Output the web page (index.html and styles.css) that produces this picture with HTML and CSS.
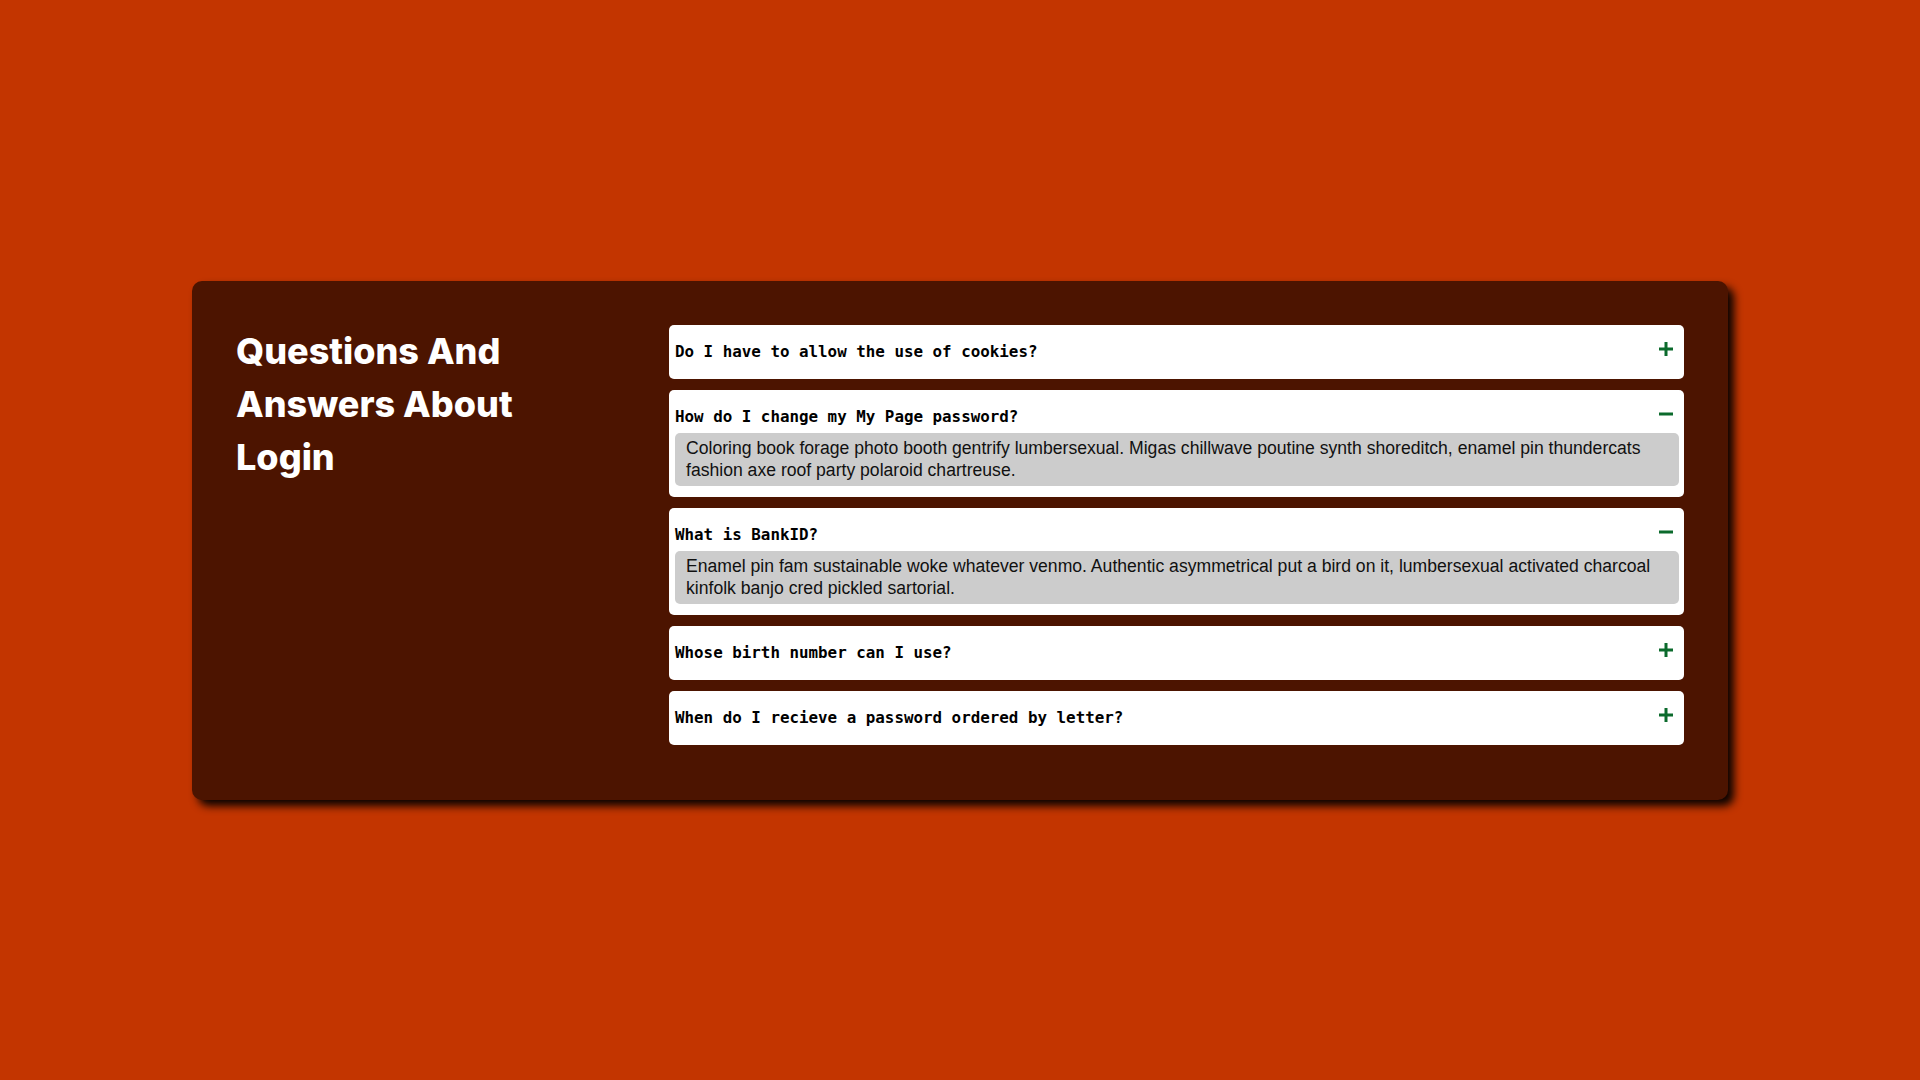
FILE: index.html
```html
<!DOCTYPE html>
<html lang="en">
<head>
<meta charset="utf-8">
<title>FAQ</title>
<link rel="stylesheet" href="styles.css">
</head>
<body>
<main class="card">
  <section class="intro">
    <h1 class="title">Questions And Answers About Login</h1>
  </section>
  <section class="faq">
    <div class="item">
      <div class="question"><span>Do I have to allow the use of cookies?</span>
        <svg class="icon" viewBox="0 0 14 14" width="14" height="14"><rect x="0" y="5.5" width="14" height="3"/><rect x="5.5" y="0" width="3" height="14"/></svg>
      </div>
    </div>
    <div class="item">
      <div class="question"><span>How do I change my My Page password?</span>
        <svg class="icon" viewBox="0 0 14 14" width="14" height="14"><rect x="0" y="5.5" width="14" height="3"/></svg>
      </div>
      <p class="answer">Coloring book forage photo booth gentrify lumbersexual. Migas chillwave poutine synth shoreditch, enamel pin thundercats fashion axe roof party polaroid chartreuse.</p>
    </div>
    <div class="item">
      <div class="question"><span>What is BankID?</span>
        <svg class="icon" viewBox="0 0 14 14" width="14" height="14"><rect x="0" y="5.5" width="14" height="3"/></svg>
      </div>
      <p class="answer">Enamel pin fam sustainable woke whatever venmo. Authentic asymmetrical put a bird on it, lumbersexual activated charcoal kinfolk banjo cred pickled sartorial.</p>
    </div>
    <div class="item">
      <div class="question"><span>Whose birth number can I use?</span>
        <svg class="icon" viewBox="0 0 14 14" width="14" height="14"><rect x="0" y="5.5" width="14" height="3"/><rect x="5.5" y="0" width="3" height="14"/></svg>
      </div>
    </div>
    <div class="item">
      <div class="question"><span>When do I recieve a password ordered by letter?</span>
        <svg class="icon" viewBox="0 0 14 14" width="14" height="14"><rect x="0" y="5.5" width="14" height="3"/><rect x="5.5" y="0" width="3" height="14"/></svg>
      </div>
    </div>
  </section>
</main>
</body>
</html>
```
FILE: styles.css
```css
* { box-sizing: border-box; }
html, body { height: 100%; }
body {
  margin: 0;
  background: #c33500;
  display: flex;
  align-items: center;
  justify-content: center;
  font-family: "Liberation Sans", Arial, sans-serif;
}
.card {
  width: 1536px;
  background: #4c1400;
  border-radius: 10px;
  padding: 44px;
  display: flex;
  box-shadow: 6px 6px 8px rgba(0, 0, 0, 0.95);
}
.intro {
  flex: 0 0 433px;
}
.title {
  margin: 0;
  max-width: 320px;
  color: #ffffff;
  font-family: Inter, "Open Sans", sans-serif;
  font-weight: 800;
  font-size: 36px;
  line-height: 53px;
  letter-spacing: 0;
}
.faq {
  flex: 1;
}
.item {
  background: #ffffff;
  border-radius: 5px;
  padding: 5px 5px 11px 6px;
  margin-bottom: 11px;
}
.question {
  display: flex;
  justify-content: space-between;
  align-items: flex-start;
  padding: 13px 0 7px 0;
  font-family: "DejaVu Sans Mono", monospace;
  font-weight: bold;
  font-size: 15.85px;
  line-height: 18px;
  color: #000000;
}
.icon {
  fill: #0b6a2c;
  margin-top: -1px;
  margin-right: 6.5px;
  flex: 0 0 auto;
}
.answer {
  margin: 0;
  background: #cccccc;
  border-radius: 5px;
  padding: 4.5px 11px;
  font-size: 17.6px;
  line-height: 22px;
  color: #111111;
}
```
